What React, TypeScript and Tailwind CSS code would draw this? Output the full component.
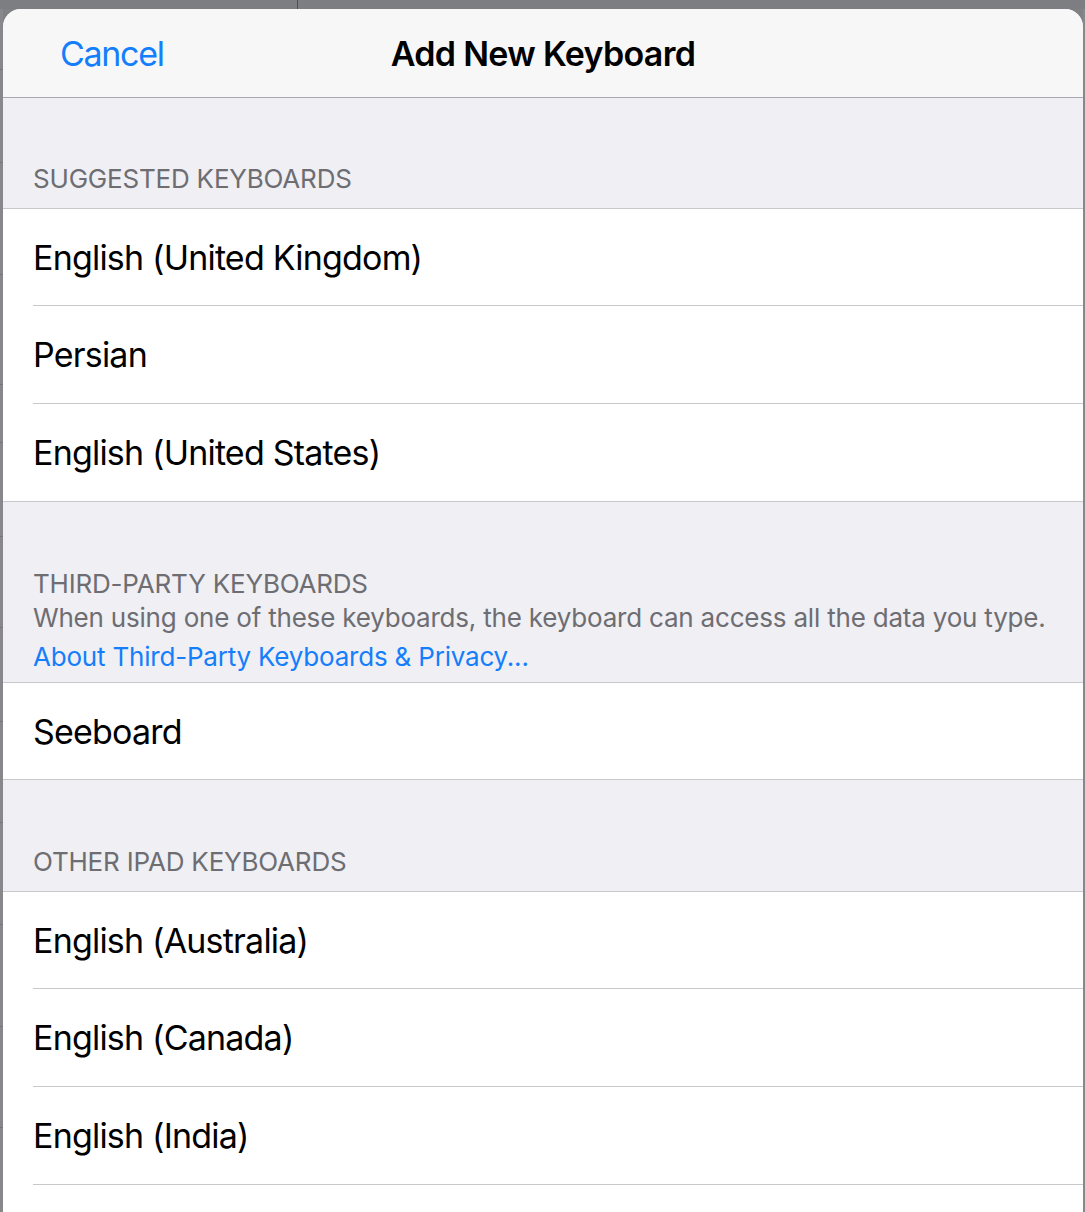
import React from "react";

const font = { fontFamily: "Inter, 'Noto Sans', sans-serif" };

function Row({ label, first, last }: { label: string; first?: boolean; last?: boolean }) {
  const h =
    first && last ? "h-[96px]" : first || last ? "h-[97px]" : "h-[98px]";
  return (
    <div className="bg-white pl-[30px]">
      <div
        className={
          h +
          " flex items-center text-[34px] text-black tracking-[-0.8px] " +
          (last ? "" : "border-b border-[#c8c7cc]")
        }
      >
        {label}
      </div>
    </div>
  );
}

function Group({ items, open }: { items: string[]; open?: boolean }) {
  return (
    <div className={"border-t border-[#c8c7cc] bg-white " + (open ? "" : "border-b")}>
      {items.map((it, i) => (
        <Row key={i} label={it} first={i === 0} last={!open && i === items.length - 1} />
      ))}
    </div>
  );
}

function SectionHeader({ title, tall }: { title: string; tall?: boolean }) {
  return (
    <div
      className={
        (tall ? "h-[111px]" : "h-[110px]") +
        " flex items-end pl-[30px] pb-[12px] text-[26px] leading-[34px] text-[#6d6d72] tracking-[-0.2px]"
      }
    >
      {title}
    </div>
  );
}

const stripLines = [61, 93, 112, 110, 58, 94, 91, 94, 101, 102, 102, 101];

export default function App() {
  return (
    <div className="w-[1085px] h-[1212px] overflow-hidden bg-[#808185] flex flex-col" style={font}>
      <div className="h-[9px] shrink-0 bg-[#7c7e82] flex">
        <div className="ml-[297px] w-px h-full bg-[#4e5054]" />
      </div>
      <div className="flex flex-1 min-h-0">
        <div className="w-[3px] shrink-0 flex flex-col bg-[#87888c]">
          {stripLines.map((h, i) => (
            <div key={i} className="shrink-0 border-b border-[#75767a]" style={{ height: h }} />
          ))}
        </div>
        <div className="flex-1 min-w-0 rounded-t-[18px] overflow-hidden bg-[#efeff4]">
          <div className="h-[89px] bg-[#f7f7f8] border-b border-[#a9a9ad] relative flex items-center justify-center">
            <div className="absolute left-[57px] top-0 h-full flex items-center text-[34px] text-[#157efb] tracking-[-1.3px]">
              Cancel
            </div>
            <div className="text-[34px] font-semibold text-black tracking-[-0.7px]">Add New Keyboard</div>
          </div>
          <SectionHeader title="SUGGESTED KEYBOARDS" />
          <Group items={["English (United Kingdom)", "Persian", "English (United States)"]} />
          <div className="h-[180px] flex flex-col justify-end pl-[30px] pb-[4px] text-[26px] tracking-[-0.2px]">
            <div className="leading-[34px] text-[#6d6d72]">THIRD-PARTY KEYBOARDS</div>
            <div className="leading-[34px] text-[#6d6d72]">
              When using one of these keyboards, the keyboard can access all the data you type.
            </div>
            <div className="leading-[43px] text-[#157efb]">About Third-Party Keyboards &amp; Privacy...</div>
          </div>
          <Group items={["Seeboard"]} />
          <SectionHeader title="OTHER IPAD KEYBOARDS" tall />
          <Group open items={["English (Australia)", "English (Canada)", "English (India)", ""]} />
        </div>
        <div className="w-[2px] shrink-0 bg-[#87888c]" />
      </div>
    </div>
  );
}
